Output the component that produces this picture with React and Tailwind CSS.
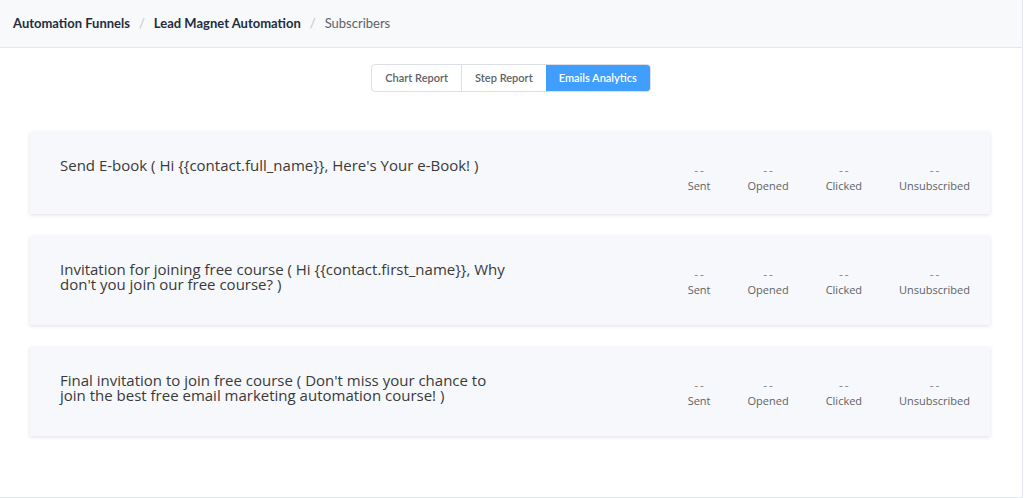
const emails = [
  {
    id: 1,
    title: "Send E-book ( Hi {{contact.full_name}}, Here's Your e-Book! )",
  },
  {
    id: 2,
    title: "Invitation for joining free course ( Hi {{contact.first_name}}, Why don't you join our free course? )",
  },
  {
    id: 3,
    title: "Final invitation to join free course ( Don't miss your chance to join the best free email marketing automation course! )",
  },
];

const stats = ['Sent', 'Opened', 'Clicked', 'Unsubscribed'];

const tabs = [
  { label: 'Chart Report', active: false },
  { label: 'Step Report', active: false },
  { label: 'Emails Analytics', active: true },
];

const EmailRow = ({ email }) => (
  <div className="flex items-start justify-between bg-[#f6f8fb] pl-[30px] pr-[20px] shadow-[0_1px_4px_rgba(0,0,0,0.13)]">
    <div className="w-[452px] pt-[26px] pb-[33px] text-[15px] leading-[15px] text-[#3a3a3a]">
      {email.title}
    </div>
    <div className="flex gap-[37px] pt-[32px] pb-[20px]">
      {stats.map((s) => (
        <div key={s} className="flex flex-col items-center">
          <span className="text-[12px] leading-[14px] tracking-[2px] pl-[2px] text-[#8a8d93]">--</span>
          <span className="text-[11px] leading-[16px] text-[#606266]">{s}</span>
        </div>
      ))}
    </div>
  </div>
);

const App = () => {
  return (
    <div className="w-[1023px] h-[498px] border-r border-b border-[#e4e7ed] bg-white font-['Open_Sans',sans-serif]">
      {/* Breadcrumb */}
      <div className="flex h-[48px] items-center gap-[9px] border-b border-[#e4e7ed] bg-[#f7f9fb] px-[13px] font-['Lato',sans-serif] text-[13px]">
        <span className="font-bold text-[#1f2d3d]">Automation Funnels</span>
        <span className="text-[#c0c4cc]">/</span>
        <span className="font-bold text-[#1f2d3d]">Lead Magnet Automation</span>
        <span className="text-[#c0c4cc]">/</span>
        <span className="text-[#606266]">Subscribers</span>
      </div>

      {/* Tabs */}
      <div className="mt-[16px] flex justify-center">
        <div className="flex h-[28px] overflow-hidden rounded-[4px] border border-[#dcdfe6] font-['Lato',sans-serif] text-[11px] font-semibold">
          {tabs.map((t, i) => (
            <div
              key={t.label}
              className={
                t.active
                  ? 'flex items-center bg-[#409eff] px-[13px] text-white'
                  : i > 0
                  ? 'flex items-center border-l border-[#dcdfe6] px-[13px] text-[#606266]'
                  : 'flex items-center px-[13px] text-[#606266]'
              }
            >
              {t.label}
            </div>
          ))}
        </div>
      </div>

      {/* Email cards */}
      <div className="mx-[30px] mt-[40px] flex w-[960px] flex-col gap-[22px]">
        {emails.map((e) => (
          <EmailRow key={e.id} email={e} />
        ))}
      </div>
    </div>
  );
};

export default App;
